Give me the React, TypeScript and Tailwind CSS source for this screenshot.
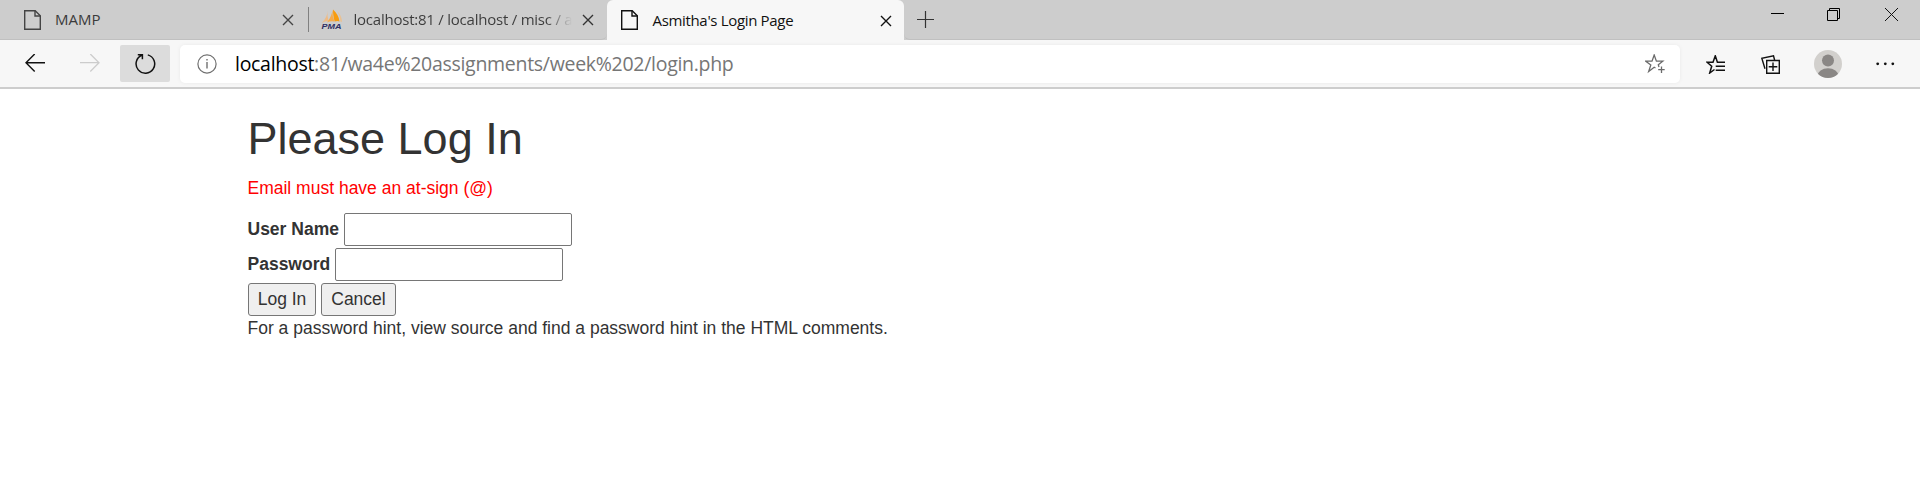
import React from "react";

const PageIcon = ({ color }: { color: string }) => (
  <svg width="18" height="20" viewBox="0 0 18 20" fill="none" stroke={color} strokeWidth="1.4" className="shrink-0">
    <path d="M.7 .7H11.2L16.3 5.800V19.3H.7Z" />
    <path d="M11 .7V6H16.3" />
  </svg>
);

const CloseIcon = ({ color }: { color: string }) => (
  <svg width="12" height="12" viewBox="0 0 12 12" fill="none" stroke={color} strokeWidth="1.4" className="shrink-0">
    <path d="M1 1L11 11M11 1L1 11" />
  </svg>
);

const PmaIcon = () => (
  <svg width="22" height="22" viewBox="0 0 22 22" className="shrink-0">
    <path d="M6.500 2Q6.500 8 .8 14Q4 12 7.500 12Q6 7 6.500 2Z" fill="#eebb86" />
    <path d="M11.500 .5Q11 7 6 13.500Q9.500 11.500 13.500 12.500Q11 7 11.500 .5Z" fill="#f6ab4c" />
    <path d="M12 .5Q12 8 13.800 12.500Q16.500 11.500 18.500 12.500Q18 6 12 .5Z" fill="#f89c0e" />
    <path d="M16.500 2.500Q19.500 8 19.300 12.500L21 13Q21 7 16.500 2.500Z" fill="#e9c193" />
    <text x="0.500" y="19.500" textLength="20" lengthAdjust="spacingAndGlyphs" className="font-['Liberation_Sans'] text-[7.500px] font-bold italic" fill="#2f2f63">PMA</text>
  </svg>
);

function TabStrip() {
  return (
    <div className="flex h-10 bg-[#cdcdcd]">
      <div className="flex h-10 w-[308.500px] items-center border-b border-[#c0c0c0] pl-6">
        <PageIcon color="#444" />
        <span className="ml-[13px] flex-1 whitespace-nowrap text-[15px] text-[#3b3b3b]">MAMP</span>
        <span className="mt-px flex"><CloseIcon color="#444" /></span>
        <span className="ml-[14px] h-[25px] w-px bg-[#808080]" />
      </div>
      <div className="flex h-10 w-[298.500px] items-center rounded-br-md border-b border-[#c0c0c0] pl-[12px]">
        <PmaIcon />
        <span className="ml-[11px] w-[218px] whitespace-nowrap bg-linear-to-r from-[#3b3b3b] from-88% to-transparent bg-clip-text text-[15px] tracking-[-0.230px] text-transparent">localhost:81 / localhost / misc / a</span>
        <span className="ml-[10px] mt-px flex"><CloseIcon color="#333" /></span>
      </div>
      <div className="flex h-10 w-[297px] items-center rounded-t-md bg-[#f7f7f7] pl-[14px]">
        <PageIcon color="#111" />
        <span className="ml-[13.500px] flex-1 whitespace-nowrap text-[15px] tracking-[-0.330px] text-[#111]">Asmitha's Login Page</span>
        <span className="mr-[12px] mt-px flex"><CloseIcon color="#111" /></span>
      </div>
      <div className="flex flex-1 rounded-bl-md border-b border-[#c0c0c0]">
        <svg width="17" height="17" viewBox="0 0 17 17" className="ml-[13px] mt-[11px]" stroke="#333" strokeWidth="1.200"><path d="M8.500 0V17M0 8.500H17" /></svg>
        <div className="ml-auto mr-[22px] flex items-start">
          <svg width="13" height="13" viewBox="0 0 13 13" className="mr-[43px] mt-[8px]" stroke="#000"><path d="M0 5.500H13" /></svg>
          <svg width="13" height="13" viewBox="0 0 13 13" className="mr-[45px] mt-[8px]" fill="none" stroke="#000"><path d="M.5 2.500H10.500V12.500H.5ZM2.500 2.500V.5H12.500V10.500H10.500" /></svg>
          <svg width="13" height="13" viewBox="0 0 13 13" className="mt-[8px]" stroke="#111"><path d="M0 0L13 13M13 0L0 13" /></svg>
        </div>
      </div>
    </div>
  );
}

function Toolbar() {
  return (
    <div className="flex h-[49px] items-start border-b-2 border-[#cdcdcd] bg-[#f7f7f7]">
      <svg width="20" height="18" viewBox="0 0 20 18" className="ml-[25px] mt-[14px]" fill="none" stroke="#111" strokeWidth="1.400"><path d="M20 8.700H1M9.700 0L1 8.700L9.700 17.500" /></svg>
      <svg width="20" height="18" viewBox="0 0 20 18" className="ml-[35px] mt-[14px]" fill="none" stroke="#ccc" strokeWidth="1.300"><path d="M0 8.700H19M10.300 0L19 8.700L10.300 17.500" /></svg>
      <div className="ml-5 mt-[5px] h-[37px] w-[50px] rounded-[2px] bg-[#dcdcdc] pl-[15px] pt-2">
        <svg width="21" height="22" viewBox="0 0 21 22" fill="none" stroke="#111" strokeWidth="1.500"><path d="M12.800 1.900A9.300 9.300 0 1 1 6.800 2.300M2.800 1.800H7.400V6.300" /></svg>
      </div>
      <div className="ml-[10px] mt-[5px] flex h-[38px] w-[1500px] items-center rounded-[5px] bg-white pl-[17px] shadow-[0_0_4px_rgba(0,0,0,0.060)]">
        <svg width="20" height="20" viewBox="0 0 20 20" fill="none" stroke="#707070" strokeWidth="1.200" className="mb-px"><circle cx="10" cy="10" r="9.100" /><path d="M10 8V14.500M10 5V6.600" strokeWidth="1.400" /></svg>
        <span className="ml-[18px] flex-1 whitespace-nowrap text-[19.500px] tracking-[-0.290px] text-[#767676]"><span className="text-black">localhost</span>:81/wa4e%20assignments/week%202/login.php</span>
        <svg width="20" height="20" viewBox="0 0 20 20" className="mr-[15px]" fill="none" stroke="#6b6b6b" strokeWidth="1.300"><path d="M10.500 14L9.200 13.300L3.700 17.500L5.800 11L.8 7.200H7L9.200 1L11.400 7.200H17.800L13.300 10.800L14 13M16.500 12.500V19M13.200 15.700H19.700" /></svg>
      </div>
      <svg width="20" height="19" viewBox="0 0 20 19" className="ml-[26px] mt-[15px]" fill="none" stroke="#111" strokeWidth="1.500"><path d="M8.500 14.500L3.700 18L5.700 11.200L1 7.200H7L9.300 .8L11.400 7.200H19M9.700 11.300H19M9.700 15.300H19" /></svg>
      <svg width="20" height="19" viewBox="0 0 20 19" className="ml-[35px] mt-[15px]" fill="none" stroke="#111" strokeWidth="1.400"><path d="M5.700 5.500H18.300V18.200H5.700ZM12 7.500V16M7.700 11.800H16.300M4 13.800L.8 3.200L12.500 .8L13.600 5" /></svg>
      <svg width="28" height="28" viewBox="0 0 28 28" className="ml-[33px] mt-[10px]"><defs><clipPath id="avatar"><circle cx="14" cy="14" r="14" /></clipPath></defs><g clipPath="url(#avatar)"><rect width="28" height="28" fill="#d2d0cd" /><circle cx="14" cy="10.500" r="6" fill="#8a8785" /><ellipse cx="14" cy="26" rx="10.500" ry="7.800" fill="#8a8785" /></g></svg>
      <svg width="19" height="4" viewBox="0 0 19 4" className="ml-[34px] mt-[21.500px]" fill="#111"><circle cx="1.700" cy="1.800" r="1.400" /><circle cx="9.300" cy="1.800" r="1.400" /><circle cx="16.800" cy="1.800" r="1.400" /></svg>
    </div>
  );
}

export default function App() {
  return (
    <div className="h-[491px] overflow-hidden bg-white font-['Open_Sans',sans-serif]">
      <TabStrip />
      <Toolbar />
      <main className="pl-[247.500px] pt-[25px] font-['Liberation_Sans',Arial,sans-serif] text-[17.500px] leading-[25px] text-[#333]">
        <h1 className="text-[45px] leading-[50px]">Please Log In</h1>
        <p className="mt-3 text-[#f00]">Email must have an at-sign (@)</p>
        <form className="mt-3">
          <div className="flex h-[35px] items-start">
            <label htmlFor="user" className="mt-[4px] w-[96.500px] whitespace-nowrap font-bold">User Name</label>
            <input id="user" className="h-[33px] w-[228px] rounded-[2px] border border-[#767676]" />
          </div>
          <div className="flex h-[35px] items-start">
            <label htmlFor="pass" className="mt-[4px] w-[87.500px] whitespace-nowrap font-bold">Password</label>
            <input id="pass" type="password" className="h-[33px] w-[228px] rounded-[2px] border border-[#767676]" />
          </div>
          <div className="flex gap-[5px] pl-[0.500px]">
            <button type="button" className="h-[33px] w-[68px] rounded-[3px] border border-[#767676] bg-[#efefef]">Log In</button>
            <button type="button" className="h-[33px] w-[75px] rounded-[3px] border border-[#767676] bg-[#efefef]">Cancel</button>
          </div>
        </form>
        <p>For a password hint, view source and find a password hint in the HTML comments.</p>
      </main>
    </div>
  );
}
